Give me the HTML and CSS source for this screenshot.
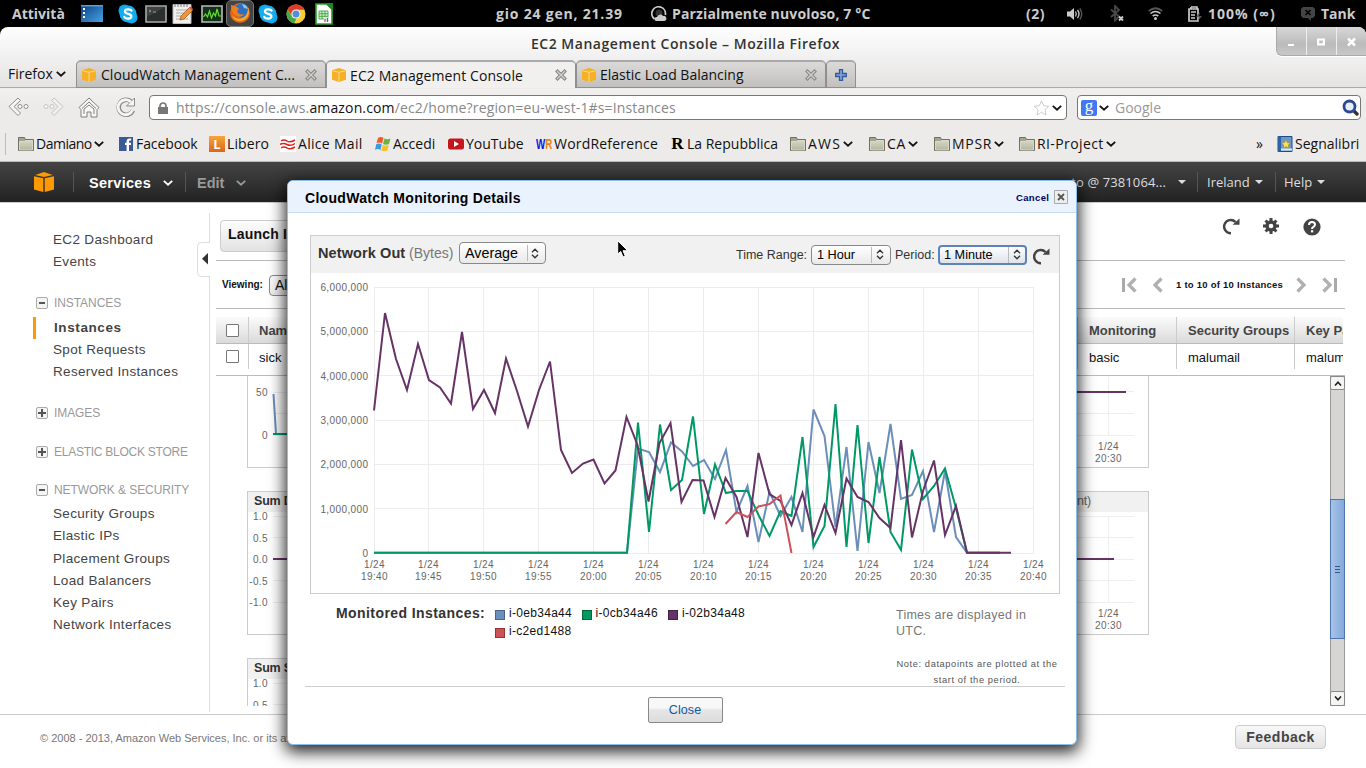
FILE: index.html
```html
<!DOCTYPE html>
<html lang="it">
<head>
<meta charset="utf-8">
<title>EC2 Management Console</title>
<link rel="stylesheet" href="styles.css">
</head>
<body>
<svg class="defs" width="0" height="0">
  <defs>
    <linearGradient id="gFolder" x1="0" y1="0" x2="0" y2="1"><stop offset="0" stop-color="#d6d7c6"/><stop offset="1" stop-color="#b4b6a0"/></linearGradient>
    <linearGradient id="gSky" x1="0" y1="0" x2="1" y2="1"><stop offset="0" stop-color="#0a3f86"/><stop offset="1" stop-color="#4aa3e6"/></linearGradient>
  </defs>
  <symbol id="cube" viewBox="0 0 20 20"><path d="M0 4.2 9.3 6.2V20L0 17.6zM10.7 6.2 20 4.2V17.6L10.7 20zM1.2 3 10 0l8.800 3L10 5z"/></symbol>
  <symbol id="favcube" viewBox="0 0 14 14"><path d="M0 2.200 7 0l7 2.200v9.600L7 14l-7-2.200z" fill="#f5b025"/><path d="M.5 2.800 7 4.300l6.500-1.500M7 4.300V14" fill="none" stroke="#fbdc98" stroke-width=".9"/></symbol>
  <symbol id="folder" viewBox="0 0 16 16"><path d="M.5 1.500h6l1 2h8v11H.5z" fill="#a3a58f" stroke="#6f715f"/><path d="M1.500 5.500h5l1-1h7v9.500h-13z" fill="url(#gFolder)" stroke="#e1e2d6" stroke-width=".8"/></symbol>
  <symbol id="chev" viewBox="0 0 10 6"><path d="M.8.8 5 4.700 9.200.8" fill="none" stroke="currentColor" stroke-width="1.800"/></symbol>
  <symbol id="tabx" viewBox="0 0 12 12"><path d="M2.500 2.500l7 7M9.500 2.500l-7 7" stroke="#85867f" stroke-width="3.400" stroke-linecap="square"/><path d="M2 2l8 8M10 2l-8 8" stroke="#d2d2cd" stroke-width="1.400"/></symbol>
  <symbol id="skype" viewBox="0 0 20 20"><circle cx="6.500" cy="6.500" r="6" fill="#0aa7ea"/><circle cx="13.500" cy="13.500" r="6" fill="#0aa7ea"/><circle cx="10" cy="10" r="8.500" fill="#14aef0"/><path d="M13.600 6.600C12.700 5 7 4.500 6.900 7.500c0 3 6.500 1.700 6.500 4.700 0 3.200-6.200 2.900-7.100.6" fill="none" stroke="#fff" stroke-width="2.200" stroke-linecap="round"/></symbol>
  <symbol id="reload" viewBox="0 0 17 17"><path d="M8 15.200A6.600 6.600 0 1 1 12.500 4" fill="none" stroke="#444" stroke-width="2.500"/><path d="M16.500.5v6.300H9.600z" fill="#444"/></symbol>
  <symbol id="spin" viewBox="0 0 8 11"><path d="M1 4.200 4 1.200l3 3M1 6.800l3 3 3-3" fill="none" stroke="#333" stroke-width="1.300"/></symbol>
  <symbol id="caret" viewBox="0 0 8 4"><path d="M0 0h8L4 4z" fill="#ddd"/></symbol>
</svg>

<header class="shell">
  <span class="s-act">Attività</span>
  <svg class="s-desk" viewBox="0 0 22 17"><path d="M0 0h22v17H0z" fill="url(#gSky)"/><path d="M2 3h2v2H2zM2 7h2v2H2zM2 11h2v2H2z" fill="#fff"/><path d="M0 0h22v1.500H0z" fill="#57a0dc"/></svg>
  <svg class="s-skype"><use href="#skype"/></svg>
  <svg class="s-term" viewBox="0 0 22 18"><path d="M1 1h20v16H1z" fill="#2b2f2f" stroke="#aaa" stroke-width="1.600"/><path d="M4 5l2 1-2 1M8 7h3" stroke="#ccc" fill="none"/><path d="M2 2h18L2 12z" fill="#555" opacity=".5"/></svg>
  <svg class="s-note" viewBox="0 0 21 21"><path d="M1 1.500h18v19H1z" fill="#f0f0ee" stroke="#bbb"/><path d="M3 1v3M6 1v3M9 1v3M12 1v3M15 1v3" stroke="#777"/><path d="M4 7h12M4 10h8M4 13h5M4 16h12" stroke="#aaa"/><path d="M8 17l1-4 8.500-8.500 3 3L12 16z" fill="#f0953a" stroke="#a55a1c" stroke-width=".8"/><path d="M17 4.500l3 3 1-1.500-2.500-2.500z" fill="#d55"/></svg>
  <svg class="s-mon" viewBox="0 0 22 18"><path d="M1 1h20v16H1z" fill="#123318" stroke="#bbb" stroke-width="1.600"/><path d="M2.500 12l2-3 2 3 2-6 2 7 2-5 2 3 1.500-7 2 7h2" fill="none" stroke="#63e22c" stroke-width="1.200"/></svg>
  <span class="s-ff"><svg viewBox="0 0 22 22"><circle cx="11" cy="11" r="10" fill="#e2641a"/><circle cx="12.500" cy="8.500" r="7" fill="#2f6fbe"/><path d="M13 2a7 7 0 0 1 6 5l-4-1z" fill="#8ec6ee"/><path d="M2 3c2 0 4 2 6 2l2 2-2 2c1 3 4 4 7 3-1 3-6 4-9 1C3 11 2 7 2 3z" fill="#ee7d1c"/><path d="M19 5c3 7-1 14-8 14-4 0-7-2-8-6 3 4 8 5 12 2 3-2 4-6 4-10z" fill="#f6a82a"/></svg></span>
  <svg class="s-skype2"><use href="#skype"/></svg>
  <svg class="s-chrome" viewBox="0 0 20 20"><circle cx="10" cy="10" r="9.500" fill="#f7ce35"/><path d="M1.600 5.500A9.500 9.500 0 0 1 18.500 5.800H10L6 12z" fill="#df3b2d"/><path d="M1.600 5.500 6.400 13.500 10.500 14l-2.200 5.300A9.500 9.500 0 0 1 1.600 5.500z" fill="#43a94c"/><circle cx="10" cy="10" r="4.600" fill="#f4f4f4"/><circle cx="10" cy="10" r="3.500" fill="#4f8de0"/></svg>
  <svg class="s-calc" viewBox="0 0 18 22"><path d="M1 1h11l5 5v15H1z" fill="#fff" stroke="#2ca02c" stroke-width="1.600"/><path d="M10 0h8v8z" fill="#1e8a1e"/><path d="M4 8h9v8H4zM4 10.700h9M4 13.300h9M7 8v8M10 8v8" fill="#d8f0d8" stroke="#3aa63a" stroke-width=".9"/><path d="M9 14h5v5H9z" fill="#dde"/><path d="M10 19v-3M12.500 19v-4" stroke="#d33"/></svg>
  <span class="s-date">gio 24 gen, 21.39</span>
  <svg class="s-wx" viewBox="0 0 16 16"><path d="M3.500 13A6.800 6.800 0 1 1 14.300 9" fill="none" stroke="#ccc" stroke-width="1.800"/><circle cx="8" cy="7" r="3.500" fill="#333"/><path d="M5 15a2 2 0 0 1 1-4 3.400 3.400 0 0 1 6-1 2.600 2.600 0 0 1 1.500 5z" fill="#ccc"/></svg>
  <span class="s-wtext">Parzialmente nuvoloso, 7 °C</span>
  <span class="s-two">(2)</span>
  <svg class="s-vol" viewBox="0 0 16 14"><path d="M0 4.500h3L7 1v12L3 9.500H0z" fill="#ccc"/><path d="M8.500 4.500q1.600 2.500 0 5M10.500 3q3 4 0 8" fill="none" stroke="#ccc" stroke-width="1.300"/><path d="M12.700 1.500q4 5.500 0 11" fill="none" stroke="#555" stroke-width="1.400"/></svg>
  <svg class="s-bt" viewBox="0 0 14 17"><path d="M1 4.500l8 7-4 4V1l4 4-8 7" fill="none" stroke="#484848" stroke-width="1.800"/><path d="M9 11.500l4 4M13 11.500l-4 4" stroke="#ccc" stroke-width="1.800"/></svg>
  <svg class="s-wifi" viewBox="0 0 15 13"><path d="M.8 4q6.700-5.500 13.400 0" fill="none" stroke="#555" stroke-width="1.800"/><path d="M2.500 6.500q5-4 10 0M4.700 9q2.800-2 5.600 0" fill="none" stroke="#ccc" stroke-width="1.600"/><circle cx="7.500" cy="11.500" r="1.500" fill="#ccc"/></svg>
  <svg class="s-bat" viewBox="0 0 14 17"><path d="M3 2h6v2M3 2v2M1 4h9v12H1z" fill="none" stroke="#ccc" stroke-width="1.700"/><path d="M3 7h5M3 10h4M3 13h4" stroke="#ccc" stroke-width="1.500"/><path d="M12 7l-4 5h3l-1 4 4-5h-3z" fill="#555"/></svg>
  <span class="s-pct">100% (∞)</span>
  <svg class="s-chat" viewBox="0 0 14 14"><path d="M2 0h10l2 2v7l-2 2h-2v3l-3-3H2L0 9V2z" fill="#444"/><path d="M4.500 3l5 5M9.500 3l-5 5" stroke="#000" stroke-width="1.500"/></svg>
  <span class="s-user">Tank</span>
</header>

<div class="window">
  <div class="titlebar">
    <span class="title">EC2 Management Console – Mozilla Firefox</span>
    <div class="winbtns">
      <svg viewBox="0 0 29 28"><path d="M11 18h6" stroke="#fff" stroke-width="2"/></svg>
      <svg viewBox="0 0 30 28"><path d="M11.500 12.500h6v5h-6z" fill="none" stroke="#fff" stroke-width="2.200"/></svg>
      <svg viewBox="0 0 29 28"><path d="M11 11.500l7 7M18 11.500l-7 7" stroke="#fff" stroke-width="2.600"/></svg>
    </div>
  </div>
  <div class="tabs">
    <div class="ffmenu"><span>Firefox</span><svg class="chev"><use href="#chev"/></svg></div>
    <div class="tab"><svg class="fav"><use href="#favcube"/></svg><span class="t1">CloudWatch Management C...</span><svg class="tx"><use href="#tabx"/></svg></div>
    <div class="tab active"><svg class="fav"><use href="#favcube"/></svg><span class="t2">EC2 Management Console</span><svg class="tx"><use href="#tabx"/></svg></div>
    <div class="tab"><svg class="fav"><use href="#favcube"/></svg><span class="t3">Elastic Load Balancing</span><svg class="tx"><use href="#tabx"/></svg></div>
    <div class="tab plus"><svg viewBox="0 0 12 12"><path d="M4.500.7h3v3.800h3.800v3H7.500v3.800h-3V7.500H.7v-3h3.800z" fill="#7fa5d8" stroke="#2f5a9c" stroke-width="1.300"/></svg></div>
    <div class="tabrest"></div>
  </div>
  <div class="nav">
    <svg class="n-back" viewBox="0 0 22 20"><path d="M11 1 2 9.500l9 9 2.500-2.500L7 9.500 13.500 3.500z" fill="#f6f6f5" stroke="#8c8c8a"/><circle cx="13" cy="9.500" r="2" fill="#fff" stroke="#8c8c8a"/><circle cx="19" cy="9.500" r="2" fill="#fff" stroke="#8c8c8a"/></svg>
    <svg class="n-fwd" viewBox="0 0 22 20"><g opacity=".4"><path d="M11 1l9 8.500-9 9L8.500 16 15 9.500 8.500 3.500z" fill="#f6f6f5" stroke="#8c8c8a"/><circle cx="9" cy="9.500" r="2" fill="#fff" stroke="#8c8c8a"/><circle cx="3" cy="9.500" r="2" fill="#fff" stroke="#8c8c8a"/></g></svg>
    <svg class="n-home" viewBox="0 0 22 21"><path d="M11 1 1 10.500 3 12.500v7.500h6v-5h4v5h6v-7.500l2-2z" fill="#f6f6f5" stroke="#80807e" stroke-linejoin="round"/><path d="M4 11.500l7-6.500 7 6.500M6 17v-5l5-4 5 4v5" fill="none" stroke="#80807e"/></svg>
    <svg class="n-rel" viewBox="0 0 20 20"><path d="M17 13.500A7.500 7.500 0 1 1 15 4.500" fill="none" stroke="#8c8c8a" stroke-width="4.600"/><path d="M18.500 1v8h-8z" fill="#f6f6f5" stroke="#8c8c8a"/><path d="M16.500 13.200A7.500 7.500 0 1 1 15 5" fill="none" stroke="#f6f6f5" stroke-width="2.800"/></svg>
    <div class="url">
      <svg class="lock" viewBox="0 0 10 12"><path d="M2 5.500V4a3 3 0 0 1 6 0v1.500" fill="none" stroke="#777" stroke-width="1.700"/><path d="M0 5h10v7H0z" fill="#777"/></svg>
      <span class="addr">https://console.aws.<b>amazon.com</b>/ec2/home?region=eu-west-1#s=Instances</span>
      <svg class="star" viewBox="0 0 17 16"><path d="M8.500 1l2.200 4.700 5.100.6-3.800 3.500 1 5.100-4.500-2.500L4 14.900l1-5.100L1.200 6.300l5.100-.6z" fill="#fff" stroke="#ccc"/></svg>
      <svg class="chev"><use href="#chev"/></svg>
    </div>
    <div class="search">
      <span class="gico">g</span><svg class="chev"><use href="#chev"/></svg><span class="gtext">Google</span>
      <svg class="mag" viewBox="0 0 17 17"><path d="M11 11l4 4" stroke="#333" stroke-width="3.400" stroke-linecap="round"/><circle cx="7.500" cy="7.500" r="5.500" fill="#e8effa" stroke="#2b4894" stroke-width="2.800"/></svg>
    </div>
  </div>
  <div class="bookmarks">
    <i class="sep"></i>
    <div class="bm b1"><svg><use href="#folder"/></svg><span>Damiano</span><svg class="chev"><use href="#chev"/></svg></div>
    <div class="bm b2"><svg viewBox="0 0 16 16"><path d="M1 1h14v14H1z" fill="#3b5998"/><path d="M11 15V9h2V6.800h-2V5.500q0-1 1-1h1.200V2.400H11.500Q8.600 2.400 8.600 5.300V6.800H7V9h1.600v6z" fill="#fff"/></svg><span>Facebook</span></div>
    <div class="bm b3"><span class="lib">L</span><span>Libero</span></div>
    <div class="bm b4"><svg viewBox="0 0 16 16"><path d="M0 0h16v16H0z" fill="#fff"/><path d="M1 5q3-2 6 0t8-1M0 8.500q3-2 7 0t8-1M1 12q3-2 6 0t8-1" fill="none" stroke="#d22" stroke-width="1.500"/></svg><span>Alice Mail</span></div>
    <div class="bm b5"><svg viewBox="0 0 16 16"><path d="M3 2q3-2 5.500 0L7 7.500Q4.500 6 1.500 7z" fill="#ee5a2a"/><path d="M9.500 2.500q3 1.500 6 0L14 8q-3 1.500-6 0z" fill="#6cb33f"/><path d="M1.200 8.200q3-1.500 5.500.3L5.500 14q-3-2-5.500 0z" fill="#3b9ae0"/><path d="M7.800 9q3 1.500 6 0l-1.500 5.500q-3 1.500-6 0z" fill="#f9c22d"/></svg><span>Accedi</span></div>
    <div class="bm b6"><svg viewBox="0 0 16 16"><rect y="2.500" width="16" height="11" rx="2.500" fill="#c4161c"/><path d="M6 5v6l5-3z" fill="#fff"/></svg><span>YouTube</span></div>
    <div class="bm b7"><span class="wr"><b>W</b><em>R</em></span><span>WordReference</span></div>
    <div class="bm b8"><span class="rr">R</span><span>La Repubblica</span></div>
    <div class="bm b9"><svg><use href="#folder"/></svg><span>AWS</span><svg class="chev"><use href="#chev"/></svg></div>
    <div class="bm b10"><svg><use href="#folder"/></svg><span>CA</span><svg class="chev"><use href="#chev"/></svg></div>
    <div class="bm b11"><svg><use href="#folder"/></svg><span>MPSR</span><svg class="chev"><use href="#chev"/></svg></div>
    <div class="bm b12"><svg><use href="#folder"/></svg><span>RI-Project</span><svg class="chev"><use href="#chev"/></svg></div>
    <div class="bm b13">»</div>
    <div class="bm b14"><svg viewBox="0 0 16 16"><path d="M1 .5h14v15H1z" fill="#6a98cc" stroke="#1f4a86"/><path d="M1 .5h3v15H1z" fill="#2f62a6"/><path d="M4 12.500h11v2H4z" fill="#dde6f2"/><path d="M9 4l1.400 2.700 3 .4-2.200 2 .6 3L9 10.700 6.200 12l.6-3-2.200-2 3-.4z" fill="#fbe24a" stroke="#a5851a" stroke-width=".5"/></svg><span>Segnalibri</span></div>
  </div>
</div>

<div class="awsnav">
  <svg class="logo"><use href="#cube"/></svg>
  <div class="menu m-serv"><span>Services</span><svg class="chev"><use href="#chev"/></svg></div>
  <div class="menu m-edit"><span>Edit</span><svg class="chev"><use href="#chev"/></svg></div>
  <div class="menu m-acct"><span>to @ 7381064...</span><svg class="caret"><use href="#caret"/></svg></div>
  <div class="menu m-reg"><span>Ireland</span><svg class="caret"><use href="#caret"/></svg></div>
  <div class="menu m-help"><span>Help</span><svg class="caret"><use href="#caret"/></svg></div>
</div>

<div class="body">
  <nav class="side">
    <a class="i-dash">EC2 Dashboard</a>
    <a class="i-ev">Events</a>
    <h4 class="h-inst"><i class="box"></i><span>INSTANCES</span></h4>
    <a class="cur i-inst">Instances</a>
    <a class="i-spot">Spot Requests</a>
    <a class="i-res">Reserved Instances</a>
    <h4 class="h-img"><i class="box more"></i><span>IMAGES</span></h4>
    <h4 class="h-ebs"><i class="box more"></i><span>ELASTIC BLOCK STORE</span></h4>
    <h4 class="h-net"><i class="box"></i><span>NETWORK &amp; SECURITY</span></h4>
    <a class="i-sg">Security Groups</a>
    <a>Elastic IPs</a>
    <a class="i-pg">Placement Groups</a>
    <a>Load Balancers</a>
    <a>Key Pairs</a>
    <a>Network Interfaces</a>
    <svg class="collapse" viewBox="0 0 13 35"><path d="M13 .5H4.500Q.5.500.5 4.500v26q0 4 4 4H13" fill="#fff" stroke="#ddd"/><path d="M11 11v11.500L5 16.700z" fill="#333"/></svg>
  </nav>
  <main class="main">
    <div class="toolbar">
      <span class="launch">Launch Instance</span>
      <svg class="t-rel"><use href="#reload"/></svg>
      <svg class="t-gear" viewBox="0 0 16 16"><path d="M6.500 0h3v16h-3zM0 6.500h16v3H0zM1.500 3.600l2.100-2.100 10.900 10.900-2.100 2.100zM12.400 1.500l2.100 2.100L3.600 14.500l-2.100-2.100z" fill="#444"/><circle cx="8" cy="8" r="5.700" fill="#444"/><circle cx="8" cy="8" r="2.300" fill="#fff"/></svg>
      <svg class="t-help" viewBox="0 0 18 18"><circle cx="9" cy="9" r="8.600" fill="#444"/><path d="M6 7q0-3 3-3t3 2.600q0 1.400-1.500 2.200T9 11" fill="none" stroke="#fff" stroke-width="2"/><path d="M8 12.200h2.200v2.200H8z" fill="#fff"/></svg>
    </div>
    <div class="viewing">
      <span class="vlabel">Viewing:</span><span class="vsel">All Instances</span>
      <svg class="pager" viewBox="0 0 50 16"><path d="M1 1h3v14H1z" fill="#a9a9a9"/><path d="M14.500 1.500 8 8l6.500 6.500M40.500 1.500 34 8l6.500 6.500" fill="none" stroke="#b0b0b0" stroke-width="3.200"/></svg>
      <span class="count">1 to 10 of 10 Instances</span>
      <svg class="pager" viewBox="0 0 50 16"><path d="M7.500 1.500 14 8l-6.500 6.500M33.500 1.500 40 8l-6.500 6.500" fill="none" stroke="#b0b0b0" stroke-width="3.200"/><path d="M44 1h3v14h-3z" fill="#a9a9a9"/></svg>
    </div>
    <div class="table">
      <div class="tr th"><span class="c0"><i></i></span><span class="c1">Name</span><span class="c2">Monitoring</span><span class="c3">Security Groups</span><span class="c4">Key Pair Name</span></div>
      <div class="tr td"><span class="c0"><i></i></span><span class="c1">sick</span><span class="c2">basic</span><span class="c3">malumail</span><span class="c4">malumail</span></div>
    </div>
    <div class="pane">
      <div class="charts">
        <div class="crow r1">
          <div class="mini"><svg width="60" height="91" viewBox="248 376 60 91"><path d="M273 392.500h35M273 413.500h35M273 435.500h35" stroke="#eee"/><g class="ax ye"><text x="268" y="396">50</text><text x="268" y="439">0</text></g><path d="M273.500 394l2.500 40" stroke="#6b8eba" stroke-width="2"/><path d="M273 434h35" stroke="#009966" stroke-width="2"/></svg></div>
          <div class="mini right"><svg width="80" height="91" viewBox="1069 376 80 91"><path d="M1069 391.500h65M1069 413.500h65M1069 435.500h65M1108.500 376v60" stroke="#eee"/><path d="M1069 392h57" stroke="#663366" stroke-width="2"/><g class="ax xe"><text x="1108.500" y="450">1/24</text><text x="1108.500" y="462">20:30</text></g></svg></div>
        </div>
        <div class="crow r2">
          <div class="mini"><h5>Sum Disk Reads</h5><svg width="60" height="123" viewBox="248 511 60 123"><path d="M273 516.500h35M273 537.500h35M273 559.500h35M273 580.500h35M273 602.500h35" stroke="#eee"/><g class="ax ye"><text x="268" y="520">1.0</text><text x="268" y="542">0.5</text><text x="268" y="563">0.0</text><text x="268" y="585">-0.5</text><text x="268" y="606">-1.0</text></g><path d="M273 559h35" stroke="#663366" stroke-width="2"/></svg></div>
          <div class="mini right"><h5 class="unit">(Count)</h5><svg width="80" height="123" viewBox="1069 511 80 123"><path d="M1069 516.500h65M1069 537.500h65M1069 559.500h65M1069 580.500h65M1069 602.500h65M1108.500 516v87" stroke="#eee"/><path d="M1069 559h45" stroke="#663366" stroke-width="2"/><g class="ax xe"><text x="1108.500" y="617">1/24</text><text x="1108.500" y="629">20:30</text></g></svg></div>
        </div>
        <div class="crow r3">
          <div class="mini"><h5>Sum Status</h5><svg width="60" height="123" viewBox="248 678 60 123"><path d="M273 683.500h35M273 704.500h35" stroke="#eee"/><g class="ax ye"><text x="268" y="687">1.0</text><text x="268" y="709">0.5</text></g></svg></div>
        </div>
      </div>
      <div class="sbar"><span class="sbtn"><svg viewBox="0 0 8 5"><path d="M1 4.500 4 1.200l3 3.300" fill="none" stroke="#222" stroke-width="1.600"/></svg></span><span class="thumb"><i></i><i></i><i></i></span><span class="sbtn"><svg viewBox="0 0 8 5"><path d="M1 .5l3 3.300L7 .5" fill="none" stroke="#222" stroke-width="1.600"/></svg></span></div>
    </div>
  </main>
</div>
<footer class="foot"><span>© 2008 - 2013, Amazon Web Services, Inc. or its affiliates. All rights reserved.</span><span class="feedback">Feedback</span></footer>

<section class="modal">
  <div class="mhead"><h2>CloudWatch Monitoring Details</h2><a>Cancel</a><svg viewBox="0 0 14 14"><path d="M.5.5h13v13H.5z" fill="#eee" stroke="#aaa"/><path d="M4 4l6 6M10 4l-6 6" stroke="#555" stroke-width="1.800"/></svg></div>
  <div class="panel">
    <div class="phead">
      <span class="pname">Network Out</span><span class="punit">(Bytes)</span><span class="sel s-avg"><span>Average</span><svg><use href="#spin"/></svg></span>
      <span class="tr-l">Time Range:</span><span class="sel s-hr"><span>1 Hour</span><svg><use href="#spin"/></svg></span>
      <span class="pe-l">Period:</span><span class="sel s-min"><span>1 Minute</span><svg><use href="#spin"/></svg></span>
      <svg class="prel"><use href="#reload"/></svg>
    </div>
    <svg class="chart" width="748" height="320" viewBox="311 273 748 320">
      <path d="M374 287.500h660M374 331.500h660M374 375.500h660M374 420.500h660M374 464.500h660M374 508.500h660M374 553.500h660M374.500 287v266M428.500 287v266M483.500 287v266M538.500 287v266M593.500 287v266M648.500 287v266M703.500 287v266M758.500 287v266M813.500 287v266M868.500 287v266M923.500 287v266M978.500 287v266M1033.500 287v266" stroke="#ececec" fill="none"/>
      <g class="ax ye"><text x="368.500" y="291">6,000,000</text><text x="368.500" y="335">5,000,000</text><text x="368.500" y="380">4,000,000</text><text x="368.500" y="424">3,000,000</text><text x="368.500" y="468">2,000,000</text><text x="368.500" y="513">1,000,000</text><text x="368.500" y="557">0</text></g>
      <g class="ax xe">
        <text x="374.500" y="568">1/24</text><text x="428.500" y="568">1/24</text><text x="483.500" y="568">1/24</text><text x="538.500" y="568">1/24</text><text x="593.500" y="568">1/24</text><text x="648.500" y="568">1/24</text><text x="703.500" y="568">1/24</text><text x="758.500" y="568">1/24</text><text x="813.500" y="568">1/24</text><text x="868.500" y="568">1/24</text><text x="923.500" y="568">1/24</text><text x="978.500" y="568">1/24</text><text x="1033.500" y="568">1/24</text>
        <text x="374.500" y="580">19:40</text><text x="428.500" y="580">19:45</text><text x="483.500" y="580">19:50</text><text x="538.500" y="580">19:55</text><text x="593.500" y="580">20:00</text><text x="648.500" y="580">20:05</text><text x="703.500" y="580">20:10</text><text x="758.500" y="580">20:15</text><text x="813.500" y="580">20:20</text><text x="868.500" y="580">20:25</text><text x="923.500" y="580">20:30</text><text x="978.500" y="580">20:35</text><text x="1033.500" y="580">20:40</text>
      </g>
      <g fill="none" stroke-width="2">
        <polyline stroke="#6b8eba" points="374,552.700 627,552.700 638,448.500 649,452 660,472 671,442.500 682,451.500 693,466 704,460 715,479 726,450 736.500,512 747.500,486 758.500,542 769.500,492 780.500,516 791.500,497 802.500,532 813.500,409.500 824.500,436 835.500,527 846.500,447 857.500,551 868.500,442 879.500,493 890.500,424 901,499 912,495 923,471 934,532 945,471 956,537 967,552.700 1000,552.700"/>
        <polyline stroke="#009966" points="374,552.700 627,552.700 638,422.500 649,532 660,424.500 671,490 682,480 693,416.500 704,514 715,464.500 726,493 736.500,491 747.500,491 758.500,515 769.500,536 780.500,511 791.500,516 802.500,437 813.500,547 824.500,526 835.500,404 846.500,547 857.500,425 868.500,543 879.500,457 890.500,532 901,550 912,449.500 923,499 934,486 945,468.500 956,508 967,552.700 1000,552.700"/>
        <polyline stroke="#663366" points="374,410.500 385,313 396,359 407,390 418,344 429,380 440,387.500 451,403.500 462,332 473,409 484,390 495,413 506,358.500 517,391 528,426.500 539,390 550,361.500 561,450 572,473 583,463.500 593.500,459.500 604.500,483.500 615.500,470.500 626.500,417 637.500,445 648.500,501.500 659.500,443 670.500,423 681.500,502 692.500,480 703.500,480.500 714.500,517 725.500,478 736.500,497 747.500,537 758.500,453 769.500,494 780.500,501 791.500,525 802.500,493 813.500,537 824.500,505 835.500,533 846.500,478.500 857.500,497 868.500,502 879.500,518 890.500,528 901,440 912,537.500 923,491 934,460.500 945,535 956,506 967,552.700 1011,552.700"/>
        <polyline stroke="#cc5258" points="725.500,524 736.500,512 747.500,517 758.500,506.500 769.500,504 780.500,495.500 791.500,553"/>
      </g>
    </svg>
  </div>
  <div class="legend">
    <span class="ltitle">Monitored Instances:</span>
    <div class="items"><span><i class="k1"></i>i-0eb34a44</span><span><i class="k2"></i>i-0cb34a46</span><span><i class="k3"></i>i-02b34a48</span><span><i class="k4"></i>i-c2ed1488</span></div>
    <div class="notes"><p class="utc">Times are displayed in UTC.</p><p class="note">Note: datapoints are plotted at the<br>start of the period.</p></div>
  </div>
  <div class="mfoot"><span class="close">Close</span></div>
</section>
<svg class="cursor" viewBox="0 0 12 18"><path d="M.7.7v13.500l3-2.800 2.300 5.600 2.300-1-2.300-5.300h4.700z" fill="#000" stroke="#fff" stroke-width="1"/></svg>
</body>
</html>
```
FILE: styles.css
```css
* { box-sizing: border-box; }
html, body { margin: 0; padding: 0; }
body { position: relative; width: 1366px; height: 768px; overflow: hidden; background: linear-gradient(#000 60px, #fff 60px); display: flex; flex-direction: column; font-family: "Liberation Sans", Arial, sans-serif; font-size: 13px; color: #444; white-space: nowrap; }
svg { display: block; flex: none; }
.defs { position: absolute; }
h2, h4, h5, p { margin: 0; }

/* desktop bar */
.shell { height: 27px; flex: none; background: #000; color: #ccc; display: flex; align-items: center; font: bold 14px "Open Sans", "Noto Sans", sans-serif; }
.shell > * { flex: none; }
.s-act { width: 69px; padding-left: 12px; }
.s-desk { width: 22px; height: 17px; margin-left: 12px; }
.s-skype { width: 20px; height: 20px; margin-left: 15px; }
.s-term { width: 22px; height: 18px; margin-left: 7px; }
.s-note { width: 21px; height: 21px; margin-left: 5px; }
.s-mon { width: 22px; height: 18px; margin-left: 8px; }
.s-ff { width: 28px; height: 27px; margin-left: 3px; border: 1px solid #777; border-radius: 5px; background: #444; padding: 1px 2px; }
.s-ff svg { width: 22px; height: 22px; }
.s-skype2 { width: 20px; height: 20px; margin-left: 4px; }
.s-chrome { width: 20px; height: 20px; margin-left: 8px; }
.s-calc { width: 18px; height: 22px; margin-left: 9px; }
.s-date { width: 155px; margin-left: 163px; letter-spacing: .8px; }
.s-wx { width: 16px; height: 16px; }
.s-wtext { width: 354px; margin-left: 5px; letter-spacing: .15px; }
.s-two { width: 41px; letter-spacing: .5px; }
.s-vol { width: 16px; height: 14px; }
.s-bt { width: 14px; height: 17px; margin-left: 27px; }
.s-wifi { width: 15px; height: 13px; margin-left: 24px; }
.s-bat { width: 14px; height: 17px; margin-left: 25px; }
.s-pct { width: 93px; margin-left: 6px; letter-spacing: 1px; }
.s-chat { width: 14px; height: 14px; }
.s-user { margin-left: 6px; }

/* browser window */
.window { height: 135px; flex: none; background: linear-gradient(#fefefe 0, #e5e3e2 60px, #f1f0ef 62px, #edebea 80px, #edebea); border-bottom: 1px solid #bbb; border-radius: 8px 8px 0 0; font-family: "Open Sans", "Noto Sans", sans-serif; font-size: 14px; color: #111; }
.titlebar { height: 33px; display: flex; justify-content: center; padding-left: 5px; position: relative; }
.title { font-weight: 600; font-size: 14px; line-height: 34px; color: #333; letter-spacing: .53px; }
.winbtns { position: absolute; right: 0; top: 0; display: flex; height: 29px; background: linear-gradient(#d8d8d8, #bbb 60%, #c8c8c8); border: 1px solid #aaa; border-top: 0; border-right: 0; border-radius: 0 8px 0 6px; box-shadow: 0 1px 0 #fff; }
.winbtns svg { width: 29px; height: 28px; }
.winbtns svg + svg { width: 30px; border-left: 1px solid #eee; }
.tabs { height: 28px; display: flex; }
.ffmenu { width: 76px; border-bottom: 1px solid #aaa; display: flex; align-items: center; padding-left: 8px; }
.ffmenu span { width: 48px; }
.chev { width: 10px; height: 6px; }
.tab { width: 250px; border: 1px solid #8f8f8f; border-top: 2px solid #aaa; border-radius: 5px 5px 0 0; background: linear-gradient(#dbdad9, #c2c0bf); display: flex; align-items: center; padding-left: 5px; }
.tab.active { background: #f1f0ef; border-bottom: 0; }
.tab span { width: 205px; }
.fav { width: 14px; height: 14px; margin-right: 4px; }
.t1 { letter-spacing: .05px; padding-left: 1px; }
.t2 { letter-spacing: .1px; }
.tx { width: 12px; height: 12px; }
.tab.plus { width: 30px; padding-left: 8px; }
.plus svg { width: 12px; height: 12px; }
.tabrest { flex: 1; border-bottom: 1px solid #aaa; }
.nav { height: 37px; display: flex; align-items: center; padding-top: 1px; }
.n-back { width: 22px; height: 20px; margin-left: 7px; }
.n-fwd { width: 22px; height: 20px; margin-left: 14px; }
.n-home { width: 22px; height: 21px; margin-left: 13px; }
.n-rel { width: 20px; height: 20px; margin-left: 16px; }
.url, .search { height: 25px; border: 1px solid #777; border-radius: 4px; background: #fff; display: flex; align-items: center; }
.url { width: 918px; margin-left: 13px; margin-top: 1px; }
.lock { width: 10px; height: 12px; margin-left: 8px; }
.addr { margin-left: 8px; width: 857px; color: #888; letter-spacing: .14px; line-height: 24px; padding-top: 1px; }
.addr b { font-weight: 400; color: #111; }
.star { width: 17px; height: 16px; }
.url .chev { margin-left: 2px; }
.search { width: 284px; margin-left: 10px; margin-top: 1px; padding-left: 3px; }
.gico { width: 16px; height: 16px; background: #4278f4; color: #fff; border-radius: 2px; font: 17px/11px "Liberation Serif", serif; text-align: center; }
.search .chev { margin-left: 2px; }
.gtext { color: #999; margin-left: 6px; width: 227px; }
.mag { width: 17px; height: 17px; }
.bookmarks { height: 36px; display: flex; align-items: center; padding-top: 1px; }
.sep { width: 1px; height: 22px; background: #bbb; margin-left: 5px; margin-right: 12px; }
.bm { display: flex; align-items: center; flex: none; gap: 2px; }
.bm svg { width: 16px; height: 16px; }
.bm svg.chev { width: 10px; height: 6px; }
.b1 { width: 100px; letter-spacing: -.5px; } .b2 { width: 91px; letter-spacing: -.1px; } .b3 { width: 71px; letter-spacing: .1px; } .b4 { width: 95px; letter-spacing: .3px; } .b5 { width: 73px; } .b6 { width: 88px; } .b7 { width: 134px; letter-spacing: .2px; } .b8 { width: 120px; } .b9 { width: 79px; letter-spacing: 1.200px; } .b10 { width: 65px; letter-spacing: .6px; } .b11 { width: 85px; letter-spacing: .7px; } .b12 { width: 237px; letter-spacing: .4px; } .b13 { width: 21px; }
.lib { width: 16px; height: 16px; background: linear-gradient(#f7a63a, #d9661b); color: #fff; font: bold 13px/16px "Open Sans", sans-serif; text-align: center; }
.wr { width: 16px; font: bold 15px/16px "Liberation Sans", sans-serif; display: flex; transform: scaleX(.65); transform-origin: 0 0; color: #1010e0; letter-spacing: 0; }
.wr em { color: #f08020; font-style: normal; }
.rr { width: 15px; font: bold 17px/16px "Liberation Serif", serif; color: #000; text-align: center; }

/* console navigation */
.awsnav { height: 41px; flex: none; background: linear-gradient(#444, #222); border-bottom: 1px solid #ccc; display: flex; align-items: center; color: #ddd; }
.logo { width: 20px; height: 20px; margin-left: 34px; fill: #f90; }
.menu { display: flex; align-items: center; height: 20px; flex: none; }
.menu + .menu { border-left: 1px solid #555; }
.m-serv { margin-left: 19px; width: 112px; border-left: 1px solid #555; padding: 1px 0 0 15px; font: bold 14.500px "Liberation Sans", sans-serif; letter-spacing: .3px; color: #fff; }
.m-serv span { width: 74px; }
.m-edit { width: 880px; padding: 1px 0 0 11px; font: bold 14.500px "Liberation Sans", sans-serif; color: #999; }
.m-edit span { width: 39px; }
.m-acct, .m-reg, .m-help { font-family: "Open Sans", "Noto Sans", sans-serif; }
.m-acct.m-acct { width: 132px; border-left: 0; padding-left: 0; }
.m-acct span { width: 113px; text-align: right; padding-right: 12px; letter-spacing: .1px; }
.caret { width: 8px; height: 4px; }
.m-reg { width: 78px; padding-left: 9px; }
.m-reg span { width: 48px; }
.m-help { padding-left: 8px; }
.m-help span { width: 33px; }

/* page body */
.body { height: 511px; flex: none; display: flex; padding-top: 10px; }
.side { width: 210px; height: 499px; border-right: 1px solid #ddd; padding-top: 16px; display: flex; flex-direction: column; position: relative; font-size: 13.500px; letter-spacing: .33px; }
.side a { height: 22px; line-height: 22px; padding-left: 53px; flex: none; }
.side h4 { height: 22px; display: flex; align-items: center; padding-left: 36px; font: 12px "Liberation Sans", sans-serif; letter-spacing: -.08px; color: #999; flex: none; }
.side h4 span { margin-left: 6px; }
.side .h-ebs { letter-spacing: -.25px; }
.h-inst { margin-top: 19px; }
.side .cur { margin-top: 3px; margin-left: 33px; border-left: 3px solid #f90; padding-left: 18px; font-weight: bold; letter-spacing: .6px; }
.h-img { margin-top: 19px; } .h-ebs { margin-top: 17px; } .h-net { margin-top: 16px; }
.i-sg { margin-top: 2px; } .i-pg { margin-top: 1px; }
.box { width: 12px; height: 12px; border: 1px solid #aaa; border-radius: 2px; background: linear-gradient(#555, #555) center / 6px 2px no-repeat, #f4f4f4; }
.box.more { background: linear-gradient(#555, #555) center / 8px 2px no-repeat, linear-gradient(#555, #555) center / 2px 8px no-repeat, #f4f4f4; }
.collapse { position: absolute; left: 197px; top: 29px; width: 13px; height: 35px; }
.main { margin-left: 6px; width: 1129px; display: flex; flex-direction: column; }
.toolbar { height: 48px; border-bottom: 1px solid #bbb; display: flex; align-items: flex-start; padding-top: 5px; }
.launch { width: 130px; height: 32px; margin: 2px 873px 0 4px; border: 1px solid #ccc; border-radius: 4px; background: linear-gradient(#fdfdfd, #e2e2e2); font: bold 14px/27px "Liberation Sans", sans-serif; color: #111; padding-left: 7px; letter-spacing: .2px; }
.t-rel { width: 17px; height: 17px; }
.t-gear { width: 16px; height: 16px; margin-left: 23px; }
.t-help { width: 18px; height: 18px; margin-left: 24px; }
.viewing { height: 48px; border-bottom: 1px solid #bbb; display: flex; align-items: center; color: #111; }
.viewing > * { flex: none; }
.vlabel { width: 53px; padding-left: 6px; font: bold 10px "Liberation Sans", sans-serif; }
.vsel { width: 120px; height: 21px; border: 1px solid #888; border-radius: 4px; line-height: 19px; font-size: 14px; padding-left: 5px; background: linear-gradient(#fff, #eee); margin-right: 731px; margin-top: 1px; }
.pager { width: 50px; height: 16px; margin-left: 1px; }
.count { width: 112px; margin: 0 1px 0 5px; font: bold 9.500px "Liberation Sans", sans-serif; letter-spacing: .25px; }
.table { padding-top: 8px; height: 67px; border-bottom: 1px solid #bbb; }
.tr { display: flex; width: 1127px; overflow: hidden; }
.tr span { flex: none; border-right: 1px solid #ccc; padding-left: 10px; }
.th { height: 27px; line-height: 27px; background: linear-gradient(#fbfbfb, #dadada); border-bottom: 1px solid #bbb; font-weight: bold; color: #444; }
.td { height: 25px; line-height: 28px; color: #111; }
.tr .c0 { width: 33px; display: flex; align-items: center; }
.c0 i { width: 13px; height: 13px; border: 1px solid #777; border-radius: 1px; background: #fff; }
.tr .c1 { width: 829px; } .tr .c2 { width: 99px; } .tr .c3 { width: 118px; } .tr .c4 { width: 120px; }
.tr .c2, .tr .c3, .tr .c4 { padding-left: 11px; }
.pane { height: 330px; display: flex; overflow: hidden; }
.charts { width: 1114px; padding-left: 31px; }
.crow { display: flex; justify-content: space-between; width: 902px; margin-bottom: 23px; }
.mini { width: 288px; height: 145px; border: 1px solid #ccc; }
.r1 .mini { height: 92px; border-top: 0; }
.right svg { margin-left: auto; margin-right: -1px; }
.mini h5 { height: 20px; background: #f1f1f1; font-size: 12.500px; line-height: 18px; color: #333; padding-left: 6px; letter-spacing: -.2px; }
.mini h5 + svg { margin-top: -1px; }
.r2 .mini { height: 144px; }
.mini h5.unit { font-weight: 400; color: #666; padding-left: 0; padding-right: 57px; text-align: right; }
.ax { font: 10px "Liberation Sans", sans-serif; fill: #666; letter-spacing: .4px; }
.ye { text-anchor: end; } .xe { text-anchor: middle; }
.sbar { width: 15px; height: 330px; background: #d6d5d3; border: solid #999; border-width: 0 1px; display: flex; flex-direction: column; }
.sbtn { height: 14px; margin: 0 -1px; border: 1px solid #888; border-radius: 2px; background: #f4f4f3; display: grid; place-items: center; }
.thumb + .sbtn { height: 15px; }
.sbtn svg { width: 8px; height: 5px; }
.thumb { height: 140px; margin: 109px -1px 52px; border: 1px solid #4f76b0; background: linear-gradient(90deg, #a6c4e8, #85a9da); display: flex; flex-direction: column; align-items: center; justify-content: center; gap: 2px; }
.thumb i { width: 5px; height: 1px; background: #34588e; }
.foot { flex: 1; border-top: 1px solid #ccc; display: flex; align-items: flex-start; justify-content: space-between; padding: 10px 40px 0; font-size: 11px; color: #777; line-height: 27px; }
.feedback { width: 91px; height: 24px; border: 1px solid #ccc; border-radius: 4px; background: linear-gradient(#f8f8f8, #e4e4e4); font: bold 14px/22px "Liberation Sans", sans-serif; letter-spacing: .5px; color: #444; text-align: center; }

/* dialog */
.modal { position: absolute; left: 287px; top: 180px; width: 790px; height: 565px; border: 1px solid #8cbfe6; border-radius: 6px; background: #fff; box-shadow: 0 5px 16px 2px rgba(0,0,0,.85); }
.mhead { height: 32px; background: #eaf2fe; border-bottom: 1px solid #c5def5; border-radius: 5px 5px 0 0; display: flex; align-items: center; padding-left: 17px; padding-top: 1px; }
.mhead h2 { font-size: 14px; color: #000; width: 711px; letter-spacing: .3px; padding-top: 1px; }
.mhead a { font-size: 9.500px; font-weight: bold; color: #006; width: 38px; letter-spacing: .35px; }
.mhead svg { width: 14px; height: 14px; }
.panel { margin: 22px 0 0 22px; width: 750px; height: 359px; border: 1px solid #ccc; }
.phead { height: 37px; background: #f1f1f1; display: flex; align-items: center; padding-left: 7px; color: #333; }
.phead > span { flex: none; }
.pname { width: 91px; font-weight: bold; font-size: 14.500px; letter-spacing: .1px; margin-top: -3px; }
.punit { width: 50px; font-size: 14px; color: #777; margin-top: -3px; }
.sel { border: 1px solid #888; border-radius: 4px; background: linear-gradient(#fff, #e9e9e9); display: flex; align-items: center; color: #000; height: 20px; padding-left: 5px; font-size: 12.700px; }
.sel svg { width: 8px; height: 11px; }
.sel > span { border-right: 1px solid #bbb; height: 16px; line-height: 16px; margin-right: 4px; }
.s-avg { width: 87px; height: 22px; font-size: 14.300px; margin-top: -3px; }
.s-avg > span { width: 63px; margin-right: 3px; }
.tr-l, .pe-l { font-size: 12.500px; }
.tr-l { margin-left: 190px; width: 75px; }
.s-hr { width: 80px; }
.s-hr > span { width: 55px; }
.pe-l { margin-left: 4px; width: 43px; }
.s-min { width: 89px; border: 2px solid #5f83b8; background: linear-gradient(#fdfdfe, #dfe3ea); padding-left: 4px; }
.s-min > span { width: 65px; }
.prel { width: 17px; height: 17px; margin-left: 6px; margin-top: 4px; }
.legend { display: flex; height: 92px; padding: 11px 0 0 48px; }
.ltitle { width: 159px; font-weight: bold; font-size: 14px; color: #333; line-height: 16px; letter-spacing: .42px; flex: none; }
.items { width: 300px; display: flex; flex-wrap: wrap; align-content: flex-start; color: #111; font-size: 12px; letter-spacing: .3px; flex: none; }
.items span { width: 86.500px; height: 18px; line-height: 16px; display: flex; }
.items i { width: 10px; height: 10px; margin: 5px 4px 0 0; border: 1px solid; }
.items .k1 { background: #6b8eba; border-color: #47648c; }
.items .k2 { background: #096; border-color: #063; }
.items .k3 { background: #636; border-color: #424; }
.items .k4 { background: #cc5258; border-color: #933; }
.notes { margin-left: 99px; width: 166px; color: #777; white-space: normal; line-height: 16px; padding-top: 2px; flex: none; }
.utc { width: 150px; font-size: 12.500px; letter-spacing: .25px; margin-left: 2px; }
.note { font-size: 9.300px; text-align: center; margin-top: 17px; color: #555; letter-spacing: .6px; white-space: nowrap; }
.mfoot { margin: 0 11px 0 17px; border-top: 1px solid #ccc; padding-top: 10px; display: flex; justify-content: center; }
.close { width: 75px; height: 26px; border: 1px solid #888; border-radius: 2px; background: linear-gradient(#f8f8f8 40%, #e6e6e6 50%, #dcdcdc); color: #14589c; font-size: 12.500px; line-height: 24px; text-align: center; letter-spacing: .1px; }
.cursor { position: absolute; left: 617px; top: 240px; width: 12px; height: 18px; }
```
